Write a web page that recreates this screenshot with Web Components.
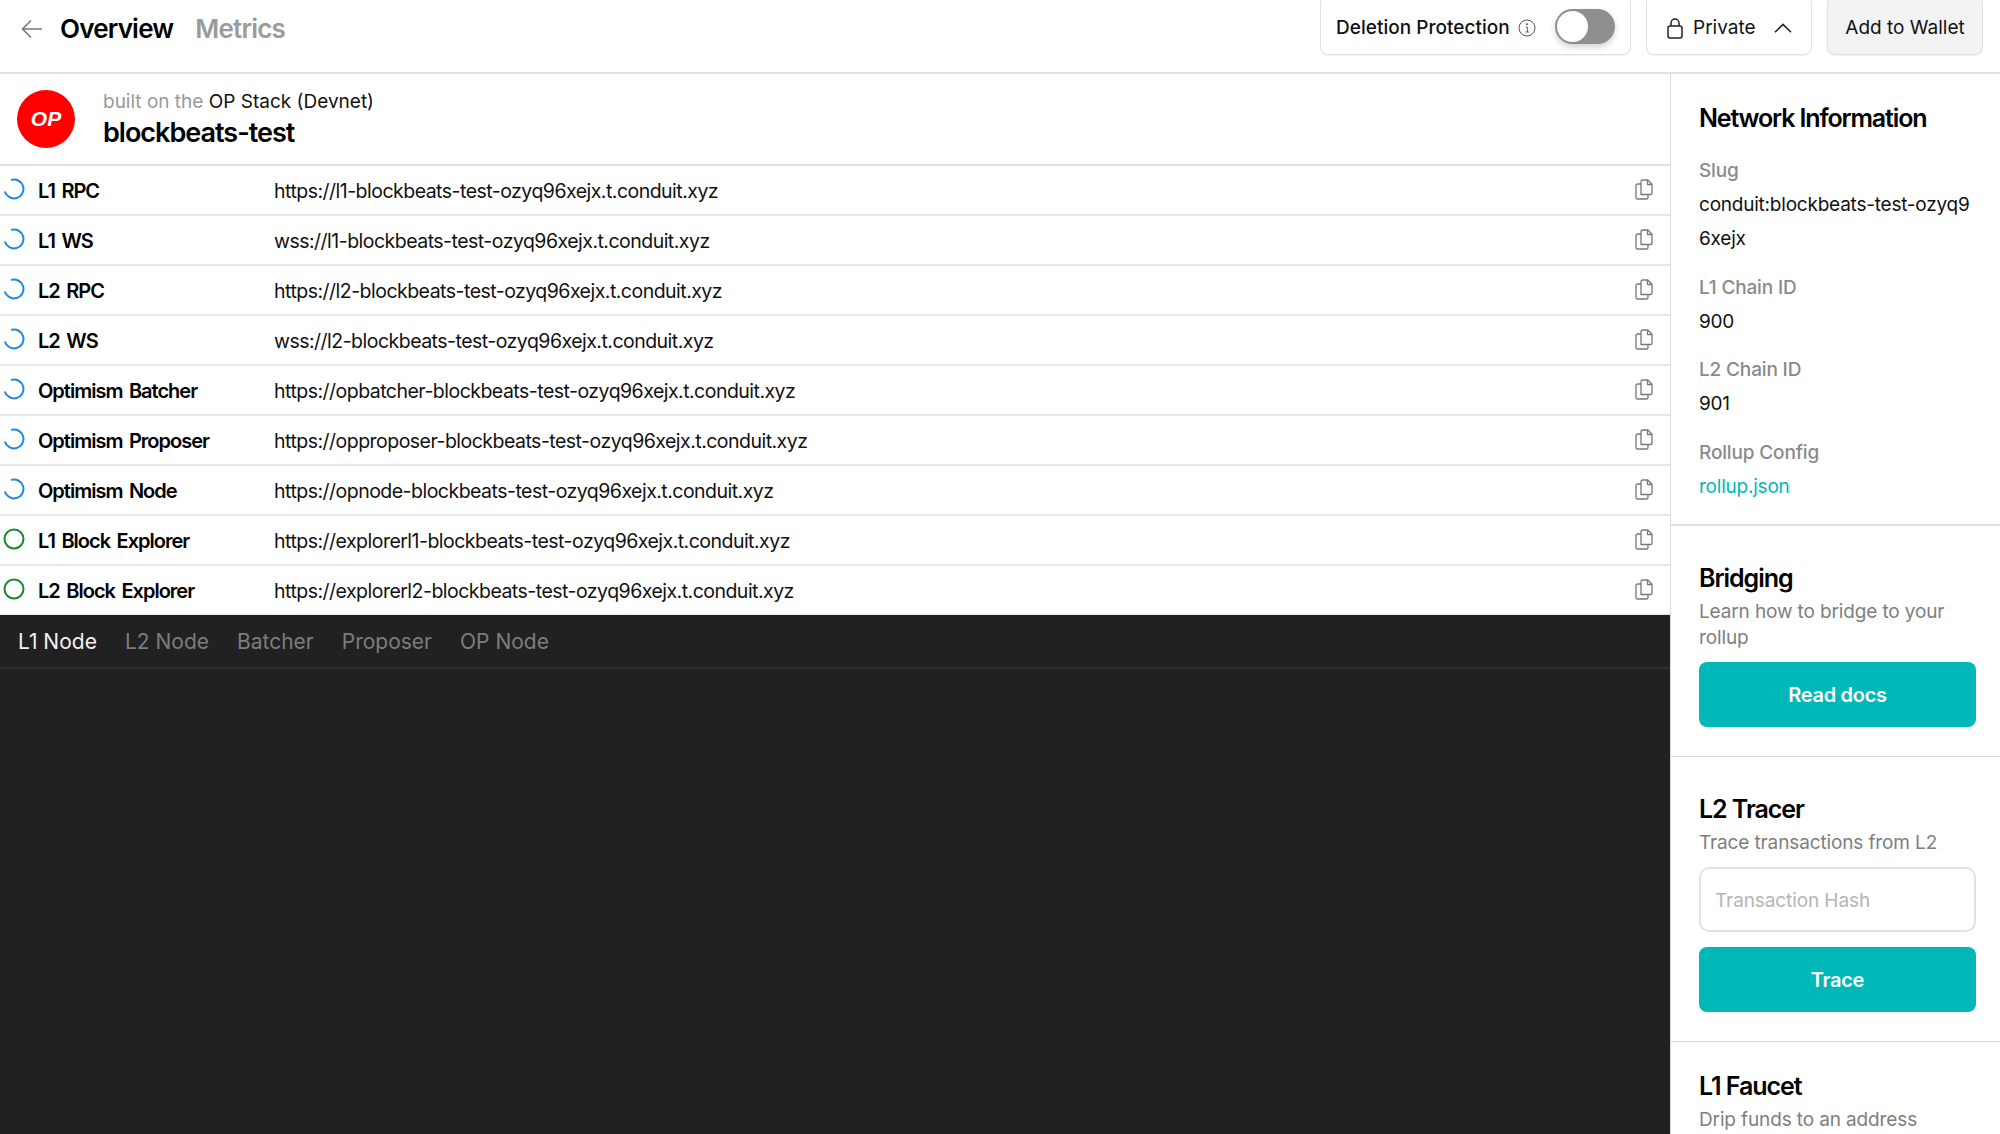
<!DOCTYPE html>
<html lang="en">
<head>
<meta charset="utf-8">
<title>blockbeats-test</title>
<style>
  html, body { margin: 0; height: 100%; overflow: hidden; background: #fff; }
  body { font-family: Inter, "Liberation Sans", sans-serif; color: #000; }
</style>
</head>
<body>
<app-shell>
  <top-bar slot="top"></top-bar>
  <chain-title slot="main"></chain-title>
  <endpoint-row slot="main" status="pending" label="L1 RPC">https://l1-blockbeats-test-ozyq96xejx.t.conduit.xyz</endpoint-row>
  <endpoint-row slot="main" status="pending" label="L1 WS">wss://l1-blockbeats-test-ozyq96xejx.t.conduit.xyz</endpoint-row>
  <endpoint-row slot="main" status="pending" label="L2 RPC">https://l2-blockbeats-test-ozyq96xejx.t.conduit.xyz</endpoint-row>
  <endpoint-row slot="main" status="pending" label="L2 WS">wss://l2-blockbeats-test-ozyq96xejx.t.conduit.xyz</endpoint-row>
  <endpoint-row slot="main" status="pending" label="Optimism Batcher">https://opbatcher-blockbeats-test-ozyq96xejx.t.conduit.xyz</endpoint-row>
  <endpoint-row slot="main" status="pending" label="Optimism Proposer">https://opproposer-blockbeats-test-ozyq96xejx.t.conduit.xyz</endpoint-row>
  <endpoint-row slot="main" status="pending" label="Optimism Node">https://opnode-blockbeats-test-ozyq96xejx.t.conduit.xyz</endpoint-row>
  <endpoint-row slot="main" status="ok" label="L1 Block Explorer">https://explorerl1-blockbeats-test-ozyq96xejx.t.conduit.xyz</endpoint-row>
  <endpoint-row slot="main" status="ok" label="L2 Block Explorer">https://explorerl2-blockbeats-test-ozyq96xejx.t.conduit.xyz</endpoint-row>
  <log-panel slot="main"></log-panel>

  <network-info slot="side"></network-info>
  <side-card slot="side" heading="Bridging" text="Learn how to bridge to your rollup">
    <teal-button>Read docs</teal-button>
  </side-card>
  <side-card slot="side" heading="L2 Tracer" text="Trace transactions from L2">
    <hash-input placeholder="Transaction Hash"></hash-input>
    <teal-button>Trace</teal-button>
  </side-card>
  <side-card slot="side" style="--card-top: 26px" heading="L1 Faucet" text="Drip funds to an address"></side-card>
</app-shell>

<script>
class AppShell extends HTMLElement {
  constructor() {
    super();
    this.attachShadow({ mode: "open" });
  }
  connectedCallback() {
    this.shadowRoot.innerHTML = `
      <style>
        :host { display: flex; flex-direction: column; height: 100vh; overflow: hidden; }
        .body { flex: 1; display: flex; min-height: 0; }
        .main { flex: 1; min-width: 0; display: flex; flex-direction: column; }
        .side { width: 329px; flex: none; border-left: 1px solid #dcdcdc; overflow: hidden; }
      </style>
      <slot name="top"></slot>
      <div class="body">
        <div class="main"><slot name="main"></slot></div>
        <div class="side"><slot name="side"></slot></div>
      </div>
    `;
  }
}

class TopBar extends HTMLElement {
  constructor() {
    super();
    this.attachShadow({ mode: "open" });
  }
  connectedCallback() {
    this.shadowRoot.innerHTML = `
      <style>
        :host { display: flex; align-items: flex-start; height: 72px; border-bottom: 2px solid #e2e2e2; flex: none; }
        .nav { display: flex; align-items: center; height: 57px; padding-left: 21px; }
        .back { width: 22px; height: 20px; margin-right: 17px; }
        .tab { font-size: 26px; font-weight: 600; letter-spacing: -0.8px; margin-right: 22px; }
        .tab.off { color: #9b9b9b; }
        .actions { margin-left: auto; display: flex; gap: 15px; padding-right: 17px; }
        .box { height: 60px; margin-top: -5px; padding-top: 5px; box-sizing: border-box; border: 1px solid #e0e0e0; border-radius: 8px;
               display: flex; align-items: center; font-size: 19px; color: #111; box-shadow: 0 1px 1px rgba(0,0,0,0.05); }
        .del { width: 311px; padding-left: 15px; font-weight: 500; letter-spacing: 0.03px; }
        .info { width: 18px; height: 18px; margin-left: 8px; }
        .toggle { position: relative; width: 60px; height: 35px; margin: -3px 0 0 19px; background: #8f8f8f; border-radius: 18px; box-shadow: 0 3px 6px rgba(0,0,0,0.18); }
        .knob { position: absolute; left: 2px; top: 2px; width: 31px; height: 31px; background: #fff; border-radius: 50%; }
        .priv { width: 166px; padding-left: 19px; }
        .lock { width: 18px; height: 22px; margin-right: 9px; }
        .chev { width: 18px; height: 10px; margin-left: 18px; }
        .wallet { width: 156px; justify-content: center; background: #f3f3f3; }
      </style>
      <div class="nav">
        <svg class="back" viewBox="0 0 22 20" fill="none" stroke="#777" stroke-width="1.6"><path d="M21 10H1.5M10 1.5 1.5 10l8.5 8.5"/></svg>
        <span class="tab">Overview</span>
        <span class="tab off">Metrics</span>
      </div>
      <div class="actions">
        <div class="box del">
          <span>Deletion Protection</span>
          <svg class="info" viewBox="0 0 18 18" fill="none" stroke="#555" stroke-width="1"><circle cx="9" cy="9" r="8"/><path d="M7.8 8h1.5v5M7.5 13h3.4"/><circle cx="9" cy="5.2" r=".6" fill="#555"/></svg>
          <div class="toggle"><div class="knob"></div></div>
        </div>
        <div class="box priv">
          <svg class="lock" viewBox="0 0 18 22" fill="none" stroke="#222" stroke-width="1.5"><rect x="2" y="9" width="14" height="12" rx="2"/><path d="M5 9V6a4 4 0 0 1 8 0v3"/></svg>
          <span>Private</span>
          <svg class="chev" viewBox="0 0 18 10" fill="none" stroke="#222" stroke-width="1.6"><path d="M1 9.2 9 1.4l8 7.8"/></svg>
        </div>
        <div class="box wallet">Add to Wallet</div>
      </div>
    `;
  }
}

class ChainTitle extends HTMLElement {
  constructor() {
    super();
    this.attachShadow({ mode: "open" });
  }
  connectedCallback() {
    this.shadowRoot.innerHTML = `
      <style>
        :host { display: flex; align-items: center; height: 90px; padding-left: 17px; border-bottom: 2px solid #e2e2e2; flex: none; }
        .logo { width: 58px; height: 58px; border-radius: 50%; background: #ff0000; color: #fff; display: flex; align-items: center; justify-content: center;
                font: italic 700 21px "Liberation Sans", sans-serif; margin-right: 28px; }
        .text { padding-top: 1px; }
        .sub { font-size: 19px; line-height: 26px; color: #111; }
        .sub span { color: #999; }
        .name { font-size: 27px; line-height: 36px; font-weight: 600; letter-spacing: -1px; }
      </style>
      <div class="logo">OP</div>
      <div class="text">
        <div class="sub"><span>built on the</span> OP Stack (Devnet)</div>
        <div class="name">blockbeats-test</div>
      </div>
    `;
  }
}

class EndpointRow extends HTMLElement {
  constructor() {
    super();
    this.attachShadow({ mode: "open" });
  }
  connectedCallback() {
    const ok = this.getAttribute("status") === "ok";
    const ring = ok
      ? `<circle cx="11" cy="11" r="9.5" stroke="#14892f" stroke-width="2"/>`
      : `<path d="M8 1.9A9.5 9.5 0 1 1 1.8 13.5" stroke="#1e88e5" stroke-width="2"/>`;
    this.shadowRoot.innerHTML = `
      <style>
        :host { display: flex; align-items: center; height: 48px; border-bottom: 2px solid #e8e8e8; flex: none; }
        .ring { width: 22px; height: 22px; margin-left: 3px; margin-top: -2px; flex: none; }
        .label { width: 236px; margin-left: 13px; padding-top: 2px; font-size: 20px; font-weight: 600; letter-spacing: -1px; word-spacing: 2.5px; color: #000; flex: none; }
        .url { flex: 1; padding-top: 2px; font-size: 19.5px; letter-spacing: -0.52px; color: #111; }
        .copy { width: 18px; height: 21px; margin: -2px 17px 0 0; flex: none; }
      </style>
      <svg class="ring" viewBox="0 0 22 22" fill="none">${ring}</svg>
      <span class="label">${this.getAttribute("label")}</span>
      <span class="url"><slot></slot></span>
      <svg class="copy" viewBox="0 0 18 21" fill="none" stroke="#777" stroke-width="1.3" stroke-linejoin="round">
        <path d="M6 15.5V2.6A1.6 1.6 0 0 1 7.6 1h5.2L17 5.2v8.7a1.6 1.6 0 0 1-1.6 1.6Z"/>
        <path d="M12.5 1v4.5H17"/>
        <path d="M6 5H2.6A1.6 1.6 0 0 0 1 6.6v11.8A1.6 1.6 0 0 0 2.6 20h8.8a1.6 1.6 0 0 0 1.6-1.6v-2.9"/>
      </svg>
    `;
  }
}

class LogPanel extends HTMLElement {
  constructor() {
    super();
    this.attachShadow({ mode: "open" });
  }
  connectedCallback() {
    const tabs = ["L1 Node", "L2 Node", "Batcher", "Proposer", "OP Node"];
    this.shadowRoot.innerHTML = `
      <style>
        :host { display: block; flex: 1; background: #212121; margin-top: -1px; }
        .tabs { display: flex; gap: 28px; height: 52px; align-items: center; padding-left: 18px; border-bottom: 2px solid #2f2f2f; }
        span { font-size: 21px; color: #7d7d7d; }
        span.on { color: #f2f2f2; }
      </style>
      <div class="tabs">
        ${tabs.map((t, i) => `<span class="${i === 0 ? "on" : ""}">${t}</span>`).join("")}
      </div>
    `;
  }
}

class NetworkInfo extends HTMLElement {
  constructor() {
    super();
    this.attachShadow({ mode: "open" });
  }
  connectedCallback() {
    this.shadowRoot.innerHTML = `
      <style>
        :host { display: block; padding: 26px 24px 0 28px; height: 452px; box-sizing: border-box; border-bottom: 2px solid #e2e2e2; }
        h2 { margin: 0 0 18px; font-size: 25px; line-height: 36px; font-weight: 600; letter-spacing: -1.15px; }
        dt { font-size: 19px; line-height: 34px; font-weight: 500; color: #8a8a8a; letter-spacing: -0.15px; }
        dd { margin: 0 0 14.5px; font-size: 19px; line-height: 34px; color: #111; word-break: break-all; letter-spacing: -0.22px; }
        dl { margin: 0; }
        a { color: #00b8b8; text-decoration: none; }
      </style>
      <h2>Network Information</h2>
      <dl>
        <dt>Slug</dt><dd>conduit:blockbeats-test-ozyq96xejx</dd>
        <dt>L1 Chain ID</dt><dd>900</dd>
        <dt>L2 Chain ID</dt><dd>901</dd>
        <dt>Rollup Config</dt><dd><a href="#">rollup.json</a></dd>
      </dl>
    `;
  }
}

class SideCard extends HTMLElement {
  constructor() {
    super();
    this.attachShadow({ mode: "open" });
  }
  connectedCallback() {
    this.shadowRoot.innerHTML = `
      <style>
        :host { display: block; padding: var(--card-top, 34px) 24px 29px 28px; border-bottom: 1px solid #d9d9d9; }
        h3 { margin: 0 0 3px; font-size: 25px; line-height: 36px; font-weight: 600; letter-spacing: -1.05px; }
        p { margin: 0 0 11px; font-size: 19px; line-height: 26px; color: #7e7e7e; letter-spacing: -0.13px; }
        .stack { display: flex; flex-direction: column; gap: 15px; }
      </style>
      <h3>${this.getAttribute("heading")}</h3>
      <p>${this.getAttribute("text")}</p>
      <div class="stack"><slot></slot></div>
    `;
  }
}

class TealButton extends HTMLElement {
  constructor() {
    super();
    this.attachShadow({ mode: "open" });
  }
  connectedCallback() {
    this.shadowRoot.innerHTML = `
      <style>
        :host { display: flex; align-items: center; justify-content: center; height: 65px; background: #00b8b8; border-radius: 8px; color: #fff; font-size: 20px; font-weight: 600; letter-spacing: -0.3px; }
      </style>
      <slot></slot>
    `;
  }
}

class HashInput extends HTMLElement {
  constructor() {
    super();
    this.attachShadow({ mode: "open" });
  }
  connectedCallback() {
    this.shadowRoot.innerHTML = `
      <style>
        :host { display: block; }
        input { display: block; width: 100%; height: 65px; box-sizing: border-box; padding: 2px 14px 0; border: 2px solid #e2e2e2; border-radius: 10px; font: 19px Inter, sans-serif; letter-spacing: -0.1px; outline: none; }
        input::placeholder { color: #b5b5b5; opacity: 1; }
      </style>
      <input placeholder="${this.getAttribute("placeholder")}">
    `;
  }
}

customElements.define("app-shell", AppShell);
customElements.define("top-bar", TopBar);
customElements.define("chain-title", ChainTitle);
customElements.define("endpoint-row", EndpointRow);
customElements.define("log-panel", LogPanel);
customElements.define("network-info", NetworkInfo);
customElements.define("side-card", SideCard);
customElements.define("teal-button", TealButton);
customElements.define("hash-input", HashInput);
</script>
</body>
</html>
